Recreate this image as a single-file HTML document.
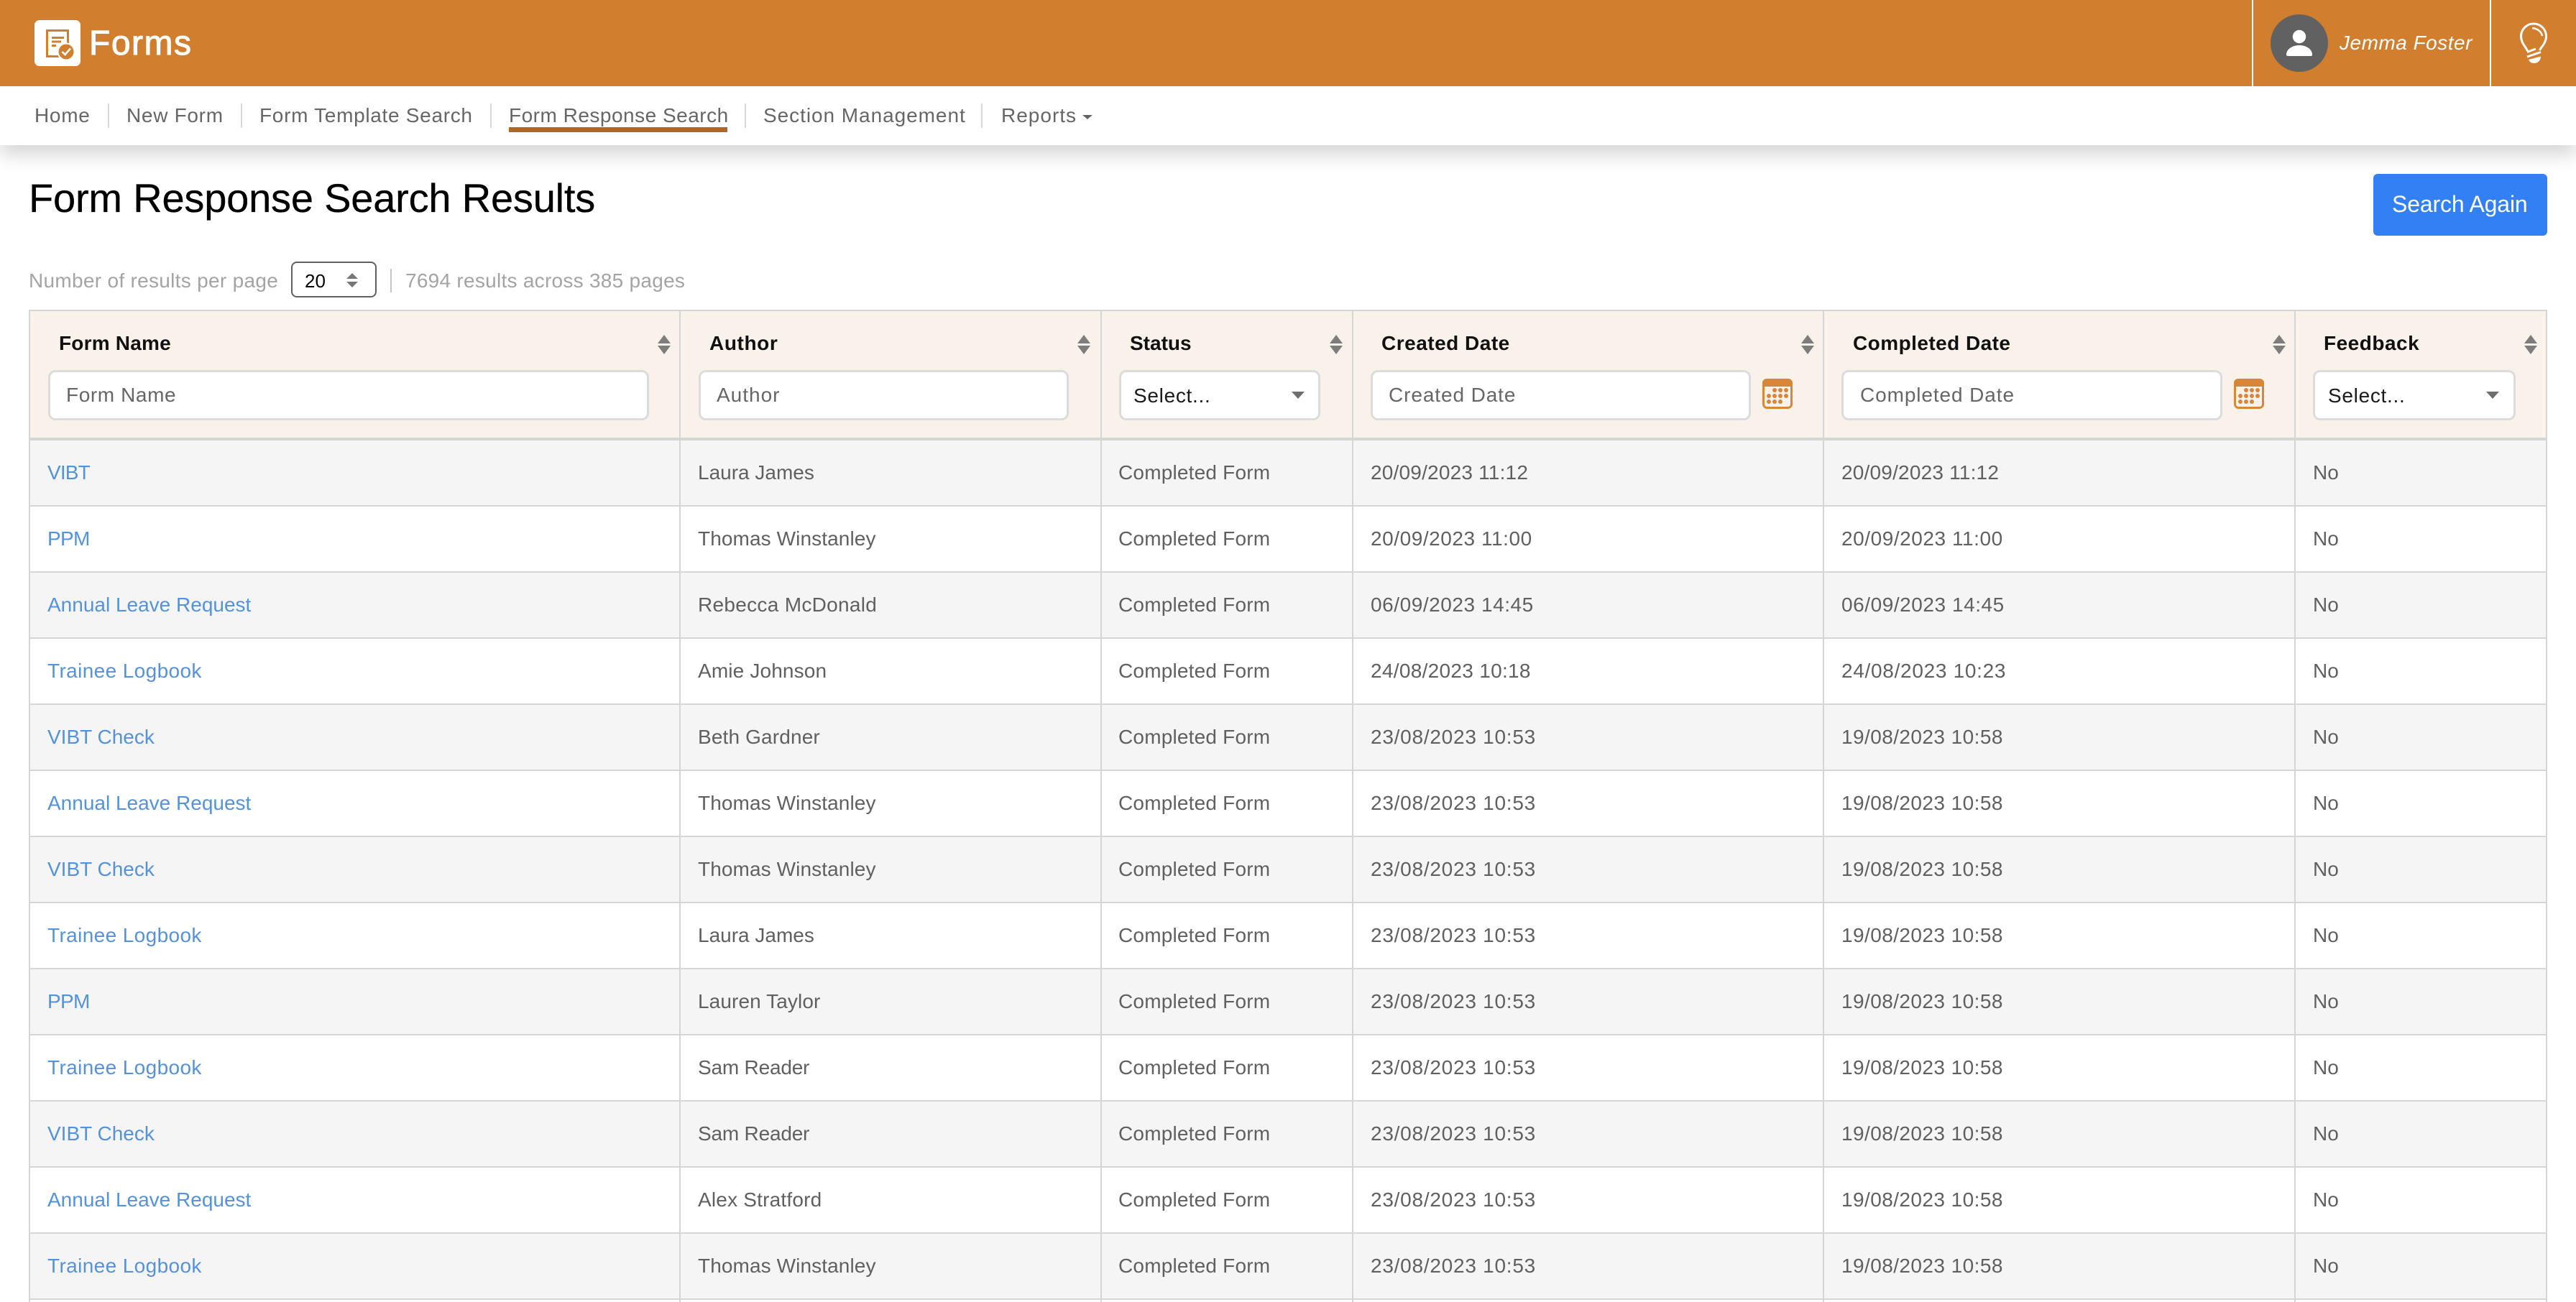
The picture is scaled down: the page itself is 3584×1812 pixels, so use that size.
<!DOCTYPE html>
<html lang="en">
<head>
<meta charset="utf-8">
<title>Form Response Search Results</title>
<style>
html,body{margin:0;padding:0;background:#fff}
body{position:relative;width:3584px;height:1812px;overflow:hidden;font-family:"Liberation Sans",sans-serif;font-size:28px;line-height:32px;color:#606060}
div,span,a{position:absolute;white-space:nowrap;box-sizing:border-box}
#hdr{left:0;top:0;width:3584px;height:120px;background:#d17f2e}
#nav{left:0;top:120px;width:3584px;height:82px;background:#fff;box-shadow:0 14px 24px rgba(0,0,0,.16)}
.vw{top:0;width:2px;height:120px;background:#fff}
.n{top:145px;color:#666;letter-spacing:.45px}
.ns{top:144px;width:2px;height:34px;background:#d8d8d8}
.g{top:375px;color:#a4a4a4;letter-spacing:.3px}
.box{top:515px;height:70px;background:#fff;border:3px solid #dcdcdc;border-radius:10px}
.th{top:462px;font-weight:bold;color:#111;letter-spacing:.3px}
.ph{top:534px;color:#666;letter-spacing:.9px}
.sel{top:535px;color:#1a1a1a;letter-spacing:.7px}
.cl{top:433px;width:2px;height:1379px;background:#d5d5d5}
.r{left:42px;width:3500px;height:92px;border-bottom:2px solid #d5d5d5}
.odd{background:#f5f5f5}
.r span{top:29px}
.c1{left:24px;color:#5592dc}
.c2{left:929px}
.c3{left:1514px;letter-spacing:.2px}
.c4{left:1865px}
.c5{left:2520px}
.c6{left:3176px}
.tl{letter-spacing:.38px}
.vb{letter-spacing:-.85px}
.pm{letter-spacing:-.7px}
.a{letter-spacing:.75px}
.b{letter-spacing:.43px}
.d{letter-spacing:.55px}
.e{letter-spacing:.2px}
.f{letter-spacing:.7px}
.m{letter-spacing:.1px}
.t{letter-spacing:.15px}
.u{letter-spacing:.3px}
</style>
</head>
<body>
<div id="nav"></div>
<div id="hdr"></div>
<div style="left:48px;top:28px;width:64px;height:64px;background:#fff;border-radius:7px"></div>
<div style="left:124px;top:33px;font-size:48px;line-height:56px;color:#fff;letter-spacing:1.5px;-webkit-text-stroke:1px #fff">Forms</div>
<div class="vw" style="left:3133px"></div>
<div class="vw" style="left:3464px"></div>
<div style="left:3159px;top:20px;width:80px;height:80px;border-radius:50%;background:#616161"></div>
<div style="left:3255px;top:44px;font-style:italic;color:#fff;letter-spacing:.5px">Jemma Foster</div>

<div class="n" style="left:48px;letter-spacing:.7px">Home</div><div class="ns" style="left:150px"></div>
<div class="n" style="left:176px;letter-spacing:.7px">New Form</div><div class="ns" style="left:335px"></div>
<div class="n" style="left:361px;letter-spacing:.7px">Form Template Search</div><div class="ns" style="left:682px"></div>
<div class="n" style="left:708px;letter-spacing:.5px">Form Response Search</div><div class="ns" style="left:1036px"></div>
<div style="left:708px;top:177px;width:304px;height:7px;background:#ad6726"></div>
<div class="n" style="left:1062px;letter-spacing:.95px">Section Management</div><div class="ns" style="left:1365px"></div>
<div class="n" style="left:1393px;letter-spacing:1px">Reports</div>

<div style="left:40px;top:244px;font-size:56px;line-height:64px;color:#000;letter-spacing:-.2px;-webkit-text-stroke:.3px #000">Form Response Search Results</div>
<div style="left:3302px;top:242px;width:242px;height:86px;background:#3380f5;border-radius:6px"></div>
<div style="left:3328px;top:266px;font-size:32px;line-height:36px;color:#fff;letter-spacing:-.15px">Search Again</div>

<div class="g" style="left:40px">Number of results per page</div>
<div style="left:405px;top:364px;width:119px;height:50px;border:2px solid #606060;border-radius:8px;background:#fff"></div>
<div style="left:424px;top:375px;font-size:26px;color:#000">20</div>
<div style="left:543px;top:374px;width:2px;height:33px;background:#c4c4c4"></div>
<div class="g" style="left:564px;letter-spacing:.27px">7694 results across 385 pages</div>

<!-- table header -->
<div style="left:40px;top:431px;width:3504px;height:182px;background:#f9f2eb;border:2px solid #d5d5d5;border-bottom:0"></div>
<div style="left:40px;top:609px;width:3504px;height:4px;background:#d5d5d5"></div>

<!-- rows -->
<div class="r odd" style="top:613px"><span class="c1 vb">VIBT</span><span class="c2">Laura James</span><span class="c3">Completed Form</span><span class="c4 e">20/09/2023 11:12</span><span class="c5 e">20/09/2023 11:12</span><span class="c6">No</span></div>
<div class="r" style="top:705px"><span class="c1 pm">PPM</span><span class="c2 m">Thomas Winstanley</span><span class="c3">Completed Form</span><span class="c4 d">20/09/2023 11:00</span><span class="c5 d">20/09/2023 11:00</span><span class="c6">No</span></div>
<div class="r odd" style="top:797px"><span class="c1">Annual Leave Request</span><span class="c2 u">Rebecca McDonald</span><span class="c3">Completed Form</span><span class="c4 d">06/09/2023 14:45</span><span class="c5 d">06/09/2023 14:45</span><span class="c6">No</span></div>
<div class="r" style="top:889px"><span class="c1 tl">Trainee Logbook</span><span class="c2 t">Amie Johnson</span><span class="c3">Completed Form</span><span class="c4 u">24/08/2023 10:18</span><span class="c5 f">24/08/2023 10:23</span><span class="c6">No</span></div>
<div class="r odd" style="top:981px"><span class="c1">VIBT Check</span><span class="c2 t">Beth Gardner</span><span class="c3">Completed Form</span><span class="c4 a">23/08/2023 10:53</span><span class="c5 b">19/08/2023 10:58</span><span class="c6">No</span></div>
<div class="r" style="top:1073px"><span class="c1">Annual Leave Request</span><span class="c2 m">Thomas Winstanley</span><span class="c3">Completed Form</span><span class="c4 a">23/08/2023 10:53</span><span class="c5 b">19/08/2023 10:58</span><span class="c6">No</span></div>
<div class="r odd" style="top:1165px"><span class="c1">VIBT Check</span><span class="c2 m">Thomas Winstanley</span><span class="c3">Completed Form</span><span class="c4 a">23/08/2023 10:53</span><span class="c5 b">19/08/2023 10:58</span><span class="c6">No</span></div>
<div class="r" style="top:1257px"><span class="c1 tl">Trainee Logbook</span><span class="c2">Laura James</span><span class="c3">Completed Form</span><span class="c4 a">23/08/2023 10:53</span><span class="c5 b">19/08/2023 10:58</span><span class="c6">No</span></div>
<div class="r odd" style="top:1349px"><span class="c1 pm">PPM</span><span class="c2 m">Lauren Taylor</span><span class="c3">Completed Form</span><span class="c4 a">23/08/2023 10:53</span><span class="c5 b">19/08/2023 10:58</span><span class="c6">No</span></div>
<div class="r" style="top:1441px"><span class="c1 tl">Trainee Logbook</span><span class="c2" style="letter-spacing:-.2px">Sam Reader</span><span class="c3">Completed Form</span><span class="c4 a">23/08/2023 10:53</span><span class="c5 b">19/08/2023 10:58</span><span class="c6">No</span></div>
<div class="r odd" style="top:1533px"><span class="c1">VIBT Check</span><span class="c2" style="letter-spacing:-.2px">Sam Reader</span><span class="c3">Completed Form</span><span class="c4 a">23/08/2023 10:53</span><span class="c5 b">19/08/2023 10:58</span><span class="c6">No</span></div>
<div class="r" style="top:1625px"><span class="c1">Annual Leave Request</span><span class="c2 e">Alex Stratford</span><span class="c3">Completed Form</span><span class="c4 a">23/08/2023 10:53</span><span class="c5 b">19/08/2023 10:58</span><span class="c6">No</span></div>
<div class="r odd" style="top:1717px"><span class="c1 tl">Trainee Logbook</span><span class="c2 m">Thomas Winstanley</span><span class="c3">Completed Form</span><span class="c4 a">23/08/2023 10:53</span><span class="c5 b">19/08/2023 10:58</span><span class="c6">No</span></div>

<!-- column lines -->
<div class="cl" style="left:40px"></div>
<div class="cl" style="left:945px"></div>
<div class="cl" style="left:1531px"></div>
<div class="cl" style="left:1881px"></div>
<div class="cl" style="left:2536px"></div>
<div class="cl" style="left:3192px"></div>
<div class="cl" style="left:3542px"></div>

<!-- header cells -->
<div class="th" style="left:82px;letter-spacing:.2px">Form Name</div>
<div class="th" style="left:987px;letter-spacing:.6px">Author</div>
<div class="th" style="left:1572px;letter-spacing:0">Status</div>
<div class="th" style="left:1922px;letter-spacing:.5px">Created Date</div>
<div class="th" style="left:2578px;letter-spacing:.45px">Completed Date</div>
<div class="th" style="left:3233px;letter-spacing:.5px">Feedback</div>

<div class="box" style="left:67px;width:836px"></div><div class="ph" style="left:92px;letter-spacing:.6px">Form Name</div>
<div class="box" style="left:972px;width:515px"></div><div class="ph" style="left:997px;letter-spacing:1px">Author</div>
<div class="box" style="left:1557px;width:280px"></div><div class="sel" style="left:1577px">Select...</div>
<div class="box" style="left:1907px;width:529px"></div><div class="ph" style="left:1932px">Created Date</div>
<div class="box" style="left:2562px;width:530px"></div><div class="ph" style="left:2588px">Completed Date</div>
<div class="box" style="left:3218px;width:282px"></div><div class="sel" style="left:3239px">Select...</div>

<!-- icons -->
<svg style="position:absolute;left:0;top:0" width="3584" height="1812" viewBox="0 0 3584 1812" xmlns="http://www.w3.org/2000/svg">
  <defs>
    <g id="sort"><path d="M0 12 L9 0 L18 12Z M0 15 L18 15 L9 27Z" fill="#7d7d7d"/></g>
    <g id="tri"><path d="M0 0 L18 0 L9 10Z" fill="#6e6e6e"/></g>
    <g id="cal">
      <rect x="1.5" y="1.5" width="39" height="39" rx="5" fill="#f9f2eb" stroke="#d8873a" stroke-width="3"/>
      <path d="M0 6 a6 6 0 0 1 6-6 h30 a6 6 0 0 1 6 6 v5 h-42z" fill="#d8873a"/>
      <g fill="#d8873a">
        <circle cx="17" cy="16" r="3"/><circle cx="25" cy="16" r="3"/><circle cx="33" cy="16" r="3"/>
        <circle cx="9" cy="24" r="3"/><circle cx="17" cy="24" r="3"/><circle cx="25" cy="24" r="3"/><circle cx="33" cy="24" r="3"/>
        <circle cx="9" cy="32" r="3"/><circle cx="17" cy="32" r="3"/><circle cx="25" cy="32" r="3"/>
      </g>
    </g>
  </defs>
  <!-- logo -->
  <rect x="65.5" y="42.5" width="29" height="36" fill="none" stroke="#d17f2e" stroke-width="3"/>
  <rect x="72" y="51" width="17" height="3" fill="#d17f2e"/>
  <rect x="72" y="56.5" width="13" height="3" fill="#d17f2e"/>
  <rect x="72" y="62" width="6" height="3" fill="#d17f2e"/>
  <circle cx="92" cy="72" r="12.5" fill="#fff"/>
  <circle cx="92" cy="72" r="10.5" fill="#d17f2e"/>
  <path d="M86.5 72 L90.5 76 L98 67.5" fill="none" stroke="#fff" stroke-width="2.6"/>
  <!-- avatar -->
  <circle cx="3199" cy="51" r="9.2" fill="#fff"/>
  <path d="M3183 78 a2 2 0 0 1-2-2 C3181 68 3190 63 3199 63 S3217 68 3217 76 a2 2 0 0 1-2 2z" fill="#fff"/>
  <!-- bulb -->
  <path d="M3516.5 71 C3515 66 3507.5 60 3507.5 50.5 A17.5 17.5 0 0 1 3542.5 50.5 C3542.5 60 3535 66 3533.5 70" fill="none" stroke="#fff" stroke-width="3"/>
  <path d="M3523 39 C3530 39.5 3536 44 3537 50" fill="none" stroke="#fff" stroke-width="2.5"/>
  <path d="M3516 72.5 L3528 68 M3516 79 L3535 72.5" fill="none" stroke="#fff" stroke-width="3"/>
  <path d="M3518 83 L3535 78.5 C3535 84 3531 88 3526 88 C3522 88 3519 86 3518 83Z" fill="#fff"/>
  <!-- reports caret -->
  <path d="M1506 160 L1520 160 L1513 166Z" fill="#666"/>
  <!-- page size arrows -->
  <path d="M482 388 L490 380 L498 388Z M482 392 L498 392 L490 400Z" fill="#777"/>
  <!-- sort arrows -->
  <use href="#sort" x="915" y="466"/>
  <use href="#sort" x="1499" y="466"/>
  <use href="#sort" x="1850" y="466"/>
  <use href="#sort" x="2506" y="466"/>
  <use href="#sort" x="3162" y="466"/>
  <use href="#sort" x="3512" y="466"/>
  <!-- select triangles -->
  <use href="#tri" x="1797" y="545"/>
  <use href="#tri" x="3459" y="545"/>
  <!-- calendars -->
  <use href="#cal" x="2452" y="527"/>
  <use href="#cal" x="3108" y="527"/>
</svg>
</body>
</html>
